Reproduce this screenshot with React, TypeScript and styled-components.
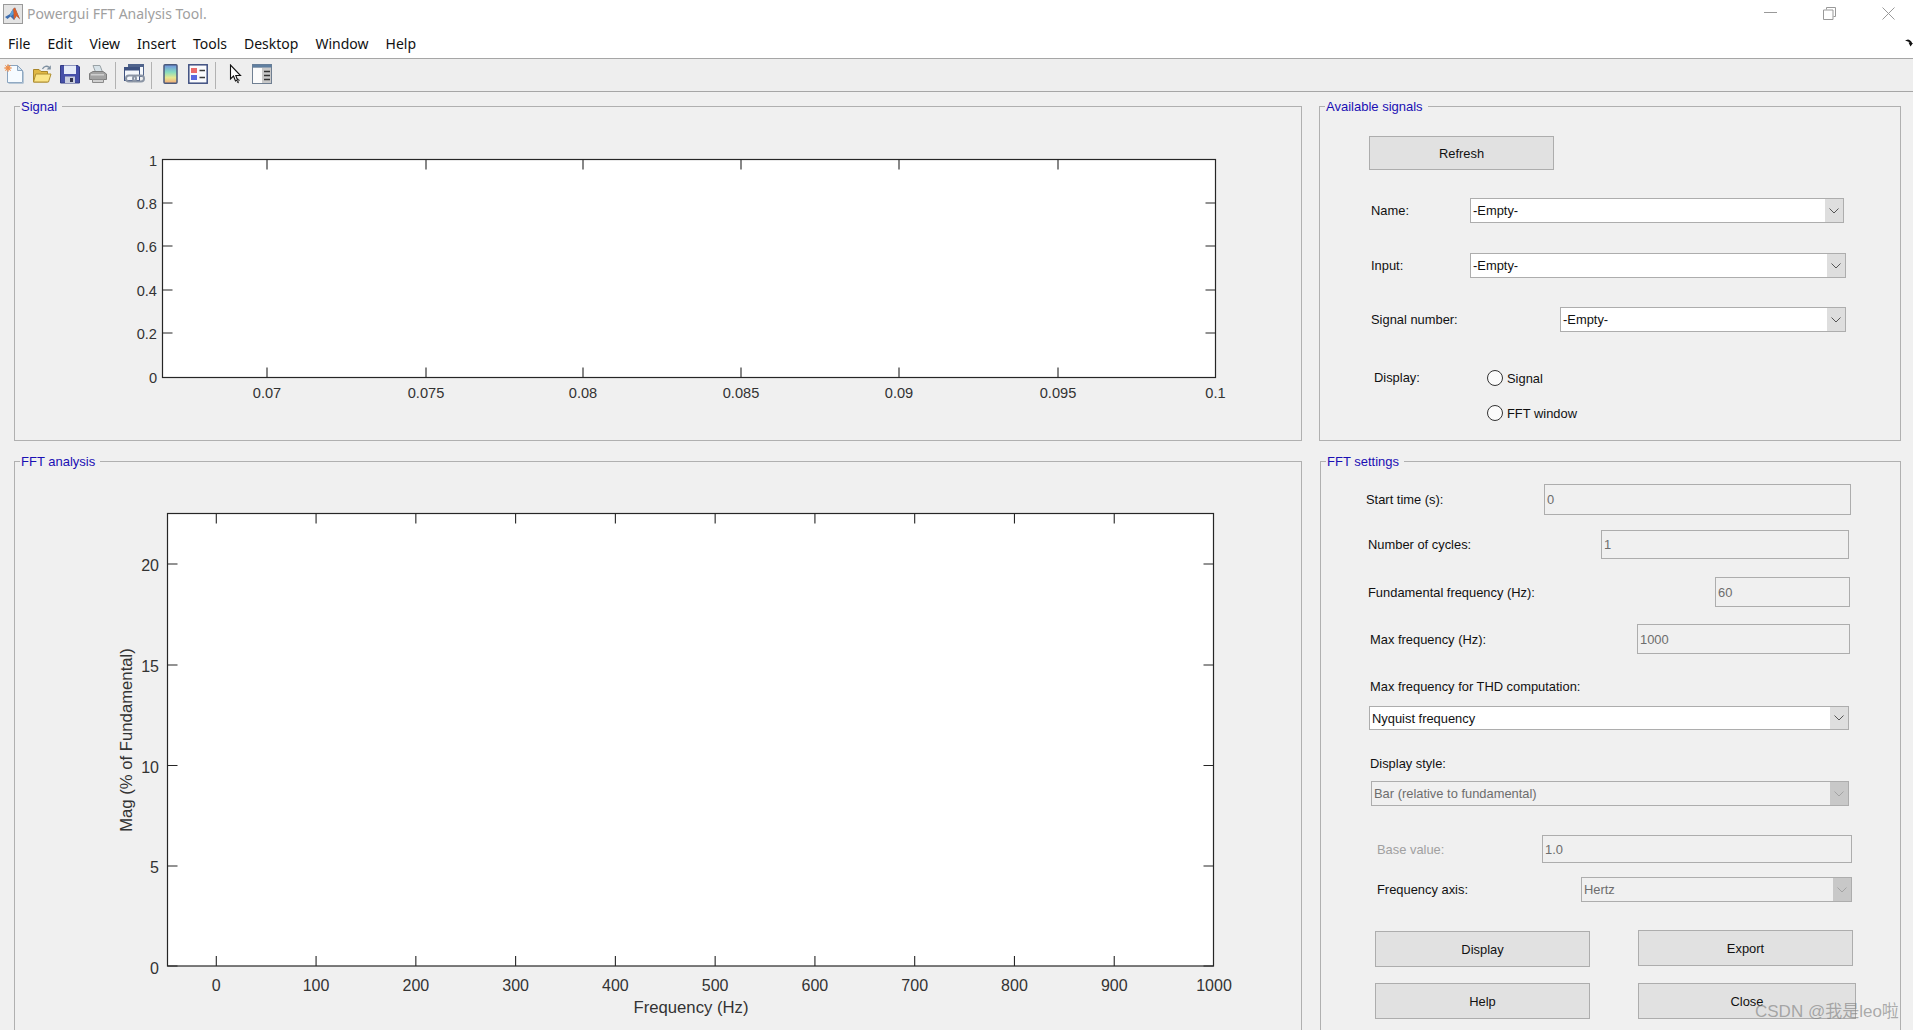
import React from "react";
import styled, { createGlobalStyle } from "styled-components";

const Global = createGlobalStyle`
  html, body { margin: 0; padding: 0; height: 100%; overflow: hidden; background: #f0f0f0; }
  #root { height: 100%; }
`;

const sans = `"Liberation Sans", Arial, sans-serif`;

const Windowed = styled.div`
  position: relative;
  width: 1913px;
  height: 1030px;
  overflow: hidden;
  background: #f0f0f0;
  font-family: ${sans};
`;
const TitleBar = styled.div`
  box-sizing: border-box;
  height: 30px;
  background: #fff;
  display: flex;
  align-items: center;
  padding: 0 18px 3px 3px;
`;
const TitleText = styled.span`
  font: 14px "Noto Sans", sans-serif;
  color: #a0a0a0;
  margin-left: 4px;
`;
const WinControls = styled.div`
  margin-left: auto;
  display: flex;
  gap: 46px;
  align-items: center;
`;
const MenuBar = styled.div`
  height: 26px;
  padding: 0 0 2px 8px;
  background: #fff;
  border-bottom: 1px solid #a6a6a6;
  display: flex;
  align-items: center;
  gap: 17px;
  font: 14px "Noto Sans", sans-serif;
  color: #111;
`;
const DockArrow = styled.svg`
  margin-left: auto;
`;
const ToolBar = styled.div`
  height: 32px;
  background: #eee;
  border-bottom: 1px solid #a6a6a6;
  display: flex;
  align-items: center;
`;
const Slot = styled.div`
  width: 28px;
  height: 20px;
  margin-bottom: 3px;
  display: flex;
  justify-content: center;
`;
const Sep = styled.div`
  width: 1px;
  height: 27px;
  margin: 0 4px 0 3px;
  background: #b2b2b2;
`;
const Main = styled.div`
  display: grid;
  grid-template-columns: 1288px 582px;
  grid-template-rows: 343px 600px;
  column-gap: 17px;
  row-gap: 12px;
  padding: 6px 0 0 14px;
`;
const Group = styled.fieldset<{ $inset?: number }>`
  margin: 0 0 0 ${(p) => p.$inset ?? 0}px;
  padding: 0;
  min-width: 0;
  border: 1px solid #b0b0b0;
`;
const Legend = styled.legend`
  margin-left: 5px;
  padding: 2px 5px 0 1px;
  font-size: 13px;
  line-height: 14px;
  color: #1a0fb4;
`;
const Plot = styled.svg`
  display: block;
`;
const Tick = styled.text<{ $size: number }>`
  font-family: ${sans};
  font-size: ${(p) => p.$size}px;
  fill: #333;
`;
const Row = styled.div<{ $mt: number; $pl: number; $pr?: number; $h: number }>`
  display: flex;
  align-items: center;
  justify-content: space-between;
  margin-top: ${(p) => p.$mt}px;
  padding-left: ${(p) => p.$pl}px;
  padding-right: ${(p) => p.$pr ?? 0}px;
  height: ${(p) => p.$h}px;
`;
const Label = styled.span<{ $muted?: boolean }>`
  font-size: 12.9px;
  color: ${(p) => (p.$muted ? "#a0a0a0" : "#111")};
  white-space: nowrap;
`;
const Field = styled.div<{ $w: number; $disabled?: boolean; $white?: boolean }>`
  box-sizing: border-box;
  width: ${(p) => p.$w}px;
  height: 100%;
  display: flex;
  align-items: center;
  padding-left: 2px;
  border: 1px solid #adadad;
  background: ${(p) => (p.$white ? "#fff" : "#f0f0f0")};
  color: ${(p) => (p.$disabled ? "#6d6d6d" : "#111")};
  font-size: 12.9px;
  white-space: nowrap;
`;
const Arrow = styled.div<{ $disabled?: boolean }>`
  margin-left: auto;
  width: 18px;
  height: 100%;
  display: flex;
  align-items: center;
  justify-content: center;
  background: ${(p) => (p.$disabled ? "#c8c8c8" : "#dedede")};
  color: ${(p) => (p.$disabled ? "#a4a4a4" : "#555")};
`;
const Button = styled.button<{ $w: number; $h: number; $mt?: number }>`
  box-sizing: border-box;
  width: ${(p) => p.$w}px;
  height: ${(p) => p.$h}px;
  margin: ${(p) => p.$mt ?? 0}px 0 0;
  padding: 1px 0 0;
  border: 1px solid #adadad;
  background: #e1e1e1;
  font: 12.9px ${sans};
  color: #111;
`;
const ButtonRow = styled.div<{ $mt: number }>`
  display: flex;
  align-items: flex-start;
  gap: 48px;
  margin-top: ${(p) => p.$mt}px;
  padding-left: 54px;
`;
const RadioCircle = styled.span`
  box-sizing: border-box;
  width: 16px;
  height: 16px;
  border-radius: 50%;
  border: 1px solid #333;
  background: #fbfbfb;
  flex: none;
`;
const RadioRow = styled.div<{ $mt: number; $pl: number }>`
  display: flex;
  align-items: center;
  height: 16px;
  margin-top: ${(p) => p.$mt}px;
  padding-left: ${(p) => p.$pl}px;
`;
const RadioText = styled.span`
  font-size: 12.9px;
  color: #111;
  margin-left: 4px;
`;
const DisplayLabel = styled.span`
  width: 113px;
  font-size: 12.9px;
  color: #111;
  margin-top: -1px;
`;
const Watermark = styled.div`
  position: absolute;
  left: 1755px;
  top: 1002px;
  font: 17px ${sans}, "Noto Sans CJK SC", sans-serif;
  line-height: 20px;
  color: rgba(125, 125, 125, 0.62);
  white-space: nowrap;
`;

const Chevron = () => (
  <svg width="10" height="6" viewBox="0 0 10 6" fill="none" stroke="currentColor" strokeWidth="1">
    <path d="M0.5 0.5 L5 5 L9.5 0.5" />
  </svg>
);

const Combo = ({ w, text, disabled, white }: { w: number; text: string; disabled?: boolean; white?: boolean }) => (
  <Field $w={w} $disabled={disabled} $white={white}>
    {text}
    <Arrow $disabled={disabled}>
      <Chevron />
    </Arrow>
  </Field>
);

const MatlabIcon = () => (
  <svg width="20" height="20" viewBox="0 0 20 20">
    <rect x="0.5" y="0.5" width="19" height="19" fill="#e4e4e4" stroke="#9a9a9a" />
    <path d="M2 13 L7 10 L10 5 L12 3.5 L17 15 L13.5 12 L11 16 L7.5 12.5 L4.5 15 Z" fill="#3f6fb0" />
    <path d="M10 5 L12 3.5 L17 15.5 L13.5 12 L11 16 L10.5 10 Z" fill="#d9612a" />
    <path d="M7 10 L10 5 L10.5 10 L7.5 12.5 Z" fill="#5fa0d8" />
  </svg>
);

const NewIcon = () => (
  <svg width="20" height="20" viewBox="0 0 20 20">
    <path d="M3.5 1.5 H13.5 L18.5 6.5 V18.5 H3.5 Z" fill="#f6fbff" stroke="#8aa4bf" />
    <path d="M13.5 1.5 V6.5 H18.5 Z" fill="#d5e4f0" stroke="#8aa4bf" />
    <path d="M4.5 19.3 H19.3 V7.5" fill="none" stroke="#a9bdd0" />
    <circle cx="4" cy="4" r="2.6" fill="#f2a86a" />
    <path d="M4 0 V8 M0 4 H8 M1.2 1.2 L6.8 6.8 M6.8 1.2 L1.2 6.8" stroke="#ea8a4c" strokeWidth="0.8" />
  </svg>
);
const OpenIcon = () => (
  <svg width="20" height="20" viewBox="0 0 20 20">
    <path d="M1.5 5.5 H7 L9 7.5 H15.5 V18 H1.5 Z" fill="#e0b844" stroke="#a8852a" />
    <path d="M1.5 18 L3.8 10 H19 L16.5 18 Z" fill="#fbe588" stroke="#b08f30" />
    <path d="M10.5 5 C12 2 15 1.6 17 3.2" fill="none" stroke="#7d8fa0" strokeWidth="1.3" />
    <path d="M18.8 1.2 V5.6 H14.6 Z" fill="#7d8fa0" />
  </svg>
);
const SaveIcon = () => (
  <svg width="20" height="20" viewBox="0 0 20 20">
    <path d="M0.5 1.5 H18 L19.5 3 V19 H0.5 Z" fill="#4650a8" stroke="#333c85" />
    <rect x="4" y="1.5" width="12" height="8.5" fill="#e6ecf8" />
    <rect x="5" y="12.5" width="10" height="6.5" fill="#c9cede" />
    <rect x="10" y="14" width="3" height="4" fill="#30344f" />
  </svg>
);
const PrintIcon = () => (
  <svg width="20" height="20" viewBox="0 0 20 20">
    <path d="M5 1.5 H12 L14.5 8 H7.5 Z" fill="#d7e2e8" stroke="#9aa2a6" />
    <path d="M1.5 9.5 L5 7.5 H15 L18.5 10 V15.5 H1.5 Z" fill="#a3a3a3" stroke="#7d7d7d" />
    <path d="M4.5 15.5 H15.5 V18.5 H4.5 Z" fill="#d0d0d0" stroke="#8b8b8b" />
    <rect x="3" y="10" width="13" height="1.5" fill="#cfcfcf" />
  </svg>
);
const LinkIcon = () => (
  <svg width="21" height="20" viewBox="0 0 21 20">
    <rect x="4.5" y="0.5" width="15" height="12" fill="#f4f7fb" stroke="#50648c" />
    <rect x="4.5" y="0.5" width="15" height="2.5" fill="#50648c" />
    <rect x="0.5" y="3.5" width="15" height="13" fill="#f4f7fb" stroke="#3e5280" />
    <rect x="0.5" y="3.5" width="15" height="3" fill="#3e5280" />
    <rect x="2" y="11.5" width="10" height="6" rx="3" fill="none" stroke="#8b95a5" strokeWidth="2" />
    <rect x="9" y="11.5" width="11" height="6" rx="3" fill="none" stroke="#8b95a5" strokeWidth="2" />
  </svg>
);
const ColorbarIcon = () => (
  <svg width="15" height="20" viewBox="0 0 15 20">
    <defs>
      <linearGradient id="cb" x1="0" y1="0" x2="0" y2="1">
        <stop offset="0" stopColor="#6e8fe0" />
        <stop offset="0.4" stopColor="#86dcc0" />
        <stop offset="0.7" stopColor="#e8e890" />
        <stop offset="1" stopColor="#f2a878" />
      </linearGradient>
    </defs>
    <rect x="1" y="0.8" width="13" height="18.4" rx="1" fill="url(#cb)" stroke="#4a5a7c" strokeWidth="1.5" />
  </svg>
);
const LegendIcon = () => (
  <svg width="20" height="20" viewBox="0 0 20 20">
    <rect x="0.8" y="0.8" width="18.4" height="18.4" fill="#fafbfd" stroke="#3e4f80" strokeWidth="1.5" />
    <rect x="3" y="4" width="6" height="5" fill="#ea6a6a" />
    <rect x="3" y="11" width="6" height="5" fill="#5a6ae0" />
    <path d="M11.5 6.5 H17 M11.5 13.5 H17" stroke="#3a3a3a" strokeWidth="1.4" />
  </svg>
);
const CursorIcon = () => (
  <svg width="20" height="20" viewBox="0 0 20 20">
    <path d="M6.5 1 L6.5 15 L9.5 12 L11.5 17 L13.5 16 L11.8 11.5 L16.5 11.5 Z" fill="#fff" stroke="#111" strokeWidth="1.1" />
    <path d="M13 15 C15.5 15 16 17 14 17.3 C12.5 17.6 13 19 15 18.6" fill="none" stroke="#111" strokeWidth="0.9" />
  </svg>
);
const BrowserIcon = () => (
  <svg width="20" height="20" viewBox="0 0 20 20">
    <rect x="0.5" y="0.5" width="19" height="19" fill="#c8c8c8" stroke="#6f7f92" />
    <rect x="0.5" y="0.5" width="19" height="3" fill="#5f7fa0" />
    <rect x="1" y="4" width="9" height="15" fill="#fbfbfb" />
    <path d="M12 7.5 H18 M12 11.5 H18 M12 15.5 H18" stroke="#333" strokeWidth="1.4" />
  </svg>
);

const sigX = [
  [267, "0.07"],
  [426, "0.075"],
  [583, "0.08"],
  [741, "0.085"],
  [899, "0.09"],
  [1058, "0.095"],
  [1215.5, "0.1"],
] as const;
const sigY = [
  [159.5, "1", 6],
  [203, "0.8", 6],
  [246, "0.6", 6],
  [290, "0.4", 6],
  [333, "0.2", 6],
  [377.5, "0", 5],
] as const;
const fftX = Array.from({ length: 11 }, (_, i) => [216.3 + 99.77 * i, String(i * 100)] as const);
const fftY = [
  [966, "0", 8],
  [866, "5", 7],
  [765.5, "10", 7],
  [665, "15", 7],
  [564, "20", 7],
] as const;

const axisColor = "#262626";

const SignalPlot = () => (
  <Plot width="1286" height="319" viewBox="15 114 1286 319">
    <rect x="162.5" y="159.5" width="1053" height="218" fill="#fff" stroke={axisColor} strokeWidth="1.2" />
    {sigX.map(([x, t]) => (
      <g key={t}>
        {x < 1215 && <path d={`M${x} 159.5 v10 M${x} 377.5 v-10`} stroke={axisColor} strokeWidth="1.1" />}
        <Tick $size={14.6} x={x} y={398} textAnchor="middle">{t}</Tick>
      </g>
    ))}
    {sigY.map(([y, t, d]) => (
      <g key={t}>
        <path d={`M162.5 ${y} h10 M1215.5 ${y} h-10`} stroke={axisColor} strokeWidth="1.1" />
        <Tick $size={14.6} x={157} y={y + d} textAnchor="end">{t}</Tick>
      </g>
    ))}
  </Plot>
);

const FftPlot = () => (
  <Plot width="1286" height="570" viewBox="15 469 1286 570">
    <rect x="167.5" y="513.5" width="1046" height="452.5" fill="#fff" stroke={axisColor} strokeWidth="1.2" />
    {fftX.map(([x, t]) => (
      <g key={t}>
        {x < 1213 && <path d={`M${x} 513.5 v10 M${x} 966 v-10`} stroke={axisColor} strokeWidth="1.1" />}
        <Tick $size={16} x={x} y={991} textAnchor="middle">{t}</Tick>
      </g>
    ))}
    {fftY.map(([y, t, d]) => (
      <g key={t}>
        <path d={`M167.5 ${y} h10 M1213.5 ${y} h-10`} stroke={axisColor} strokeWidth="1.1" />
        <Tick $size={16} x={159} y={y + d} textAnchor="end">{t}</Tick>
      </g>
    ))}
    <Tick $size={16.7} x={691} y={1013} textAnchor="middle">Frequency (Hz)</Tick>
    <Tick $size={16.7} x={0} y={0} textAnchor="middle" transform="translate(132 740) rotate(-90)">Mag (% of Fundamental)</Tick>
  </Plot>
);

export default function App() {
  return (
    <Windowed>
      <Global />
      <TitleBar>
        <MatlabIcon />
        <TitleText>Powergui FFT Analysis Tool.</TitleText>
        <WinControls>
          <svg width="13" height="13" viewBox="0 0 13 13" stroke="#999" fill="none"><path d="M0 5.5 H13" /></svg>
          <svg width="13" height="13" viewBox="0 0 13 13" stroke="#999" fill="none"><path d="M3.5 2.5 V0.5 H12.5 V9.5 H10.5 M0.5 3 H10 V12.5 H0.5 Z" /></svg>
          <svg width="13" height="13" viewBox="0 0 13 13" stroke="#999" fill="none"><path d="M0.5 0.5 L12.5 12.5 M12.5 0.5 L0.5 12.5" /></svg>
        </WinControls>
      </TitleBar>
      <MenuBar>
        {["File", "Edit", "View", "Insert", "Tools", "Desktop", "Window", "Help"].map((m) => (
          <span key={m}>{m}</span>
        ))}
        <DockArrow width="8" height="8" viewBox="0 0 8 8"><path d="M0 1.5 L3 0.5 C5 1 7 2.5 7 4 L8 4 L5.5 7.5 L3.5 3.5 L4.8 3.8 C4 2.8 2 2.2 0 1.5 Z" fill="#111" /></DockArrow>
      </MenuBar>
      <ToolBar>
        <Slot><NewIcon /></Slot>
        <Slot><OpenIcon /></Slot>
        <Slot><SaveIcon /></Slot>
        <Slot><PrintIcon /></Slot>
        <Sep />
        <Slot><LinkIcon /></Slot>
        <Sep />
        <Slot><ColorbarIcon /></Slot>
        <Slot><LegendIcon /></Slot>
        <Sep />
        <Slot><CursorIcon /></Slot>
        <Slot><BrowserIcon /></Slot>
      </ToolBar>
      <Main>
        <Group>
          <Legend>Signal</Legend>
          <SignalPlot />
        </Group>
        <Group>
          <Legend>Available signals</Legend>
          <Row $mt={22} $pl={49} $h={34}>
            <Button $w={185} $h={34}>Refresh</Button>
          </Row>
          <Row $mt={28} $pl={51} $pr={56} $h={25}>
            <Label>Name:</Label>
            <Combo w={374} text="-Empty-" white />
          </Row>
          <Row $mt={30} $pl={51} $pr={54} $h={25}>
            <Label>Input:</Label>
            <Combo w={376} text="-Empty-" white />
          </Row>
          <Row $mt={29} $pl={51} $pr={54} $h={25}>
            <Label>Signal number:</Label>
            <Combo w={286} text="-Empty-" white />
          </Row>
          <RadioRow $mt={38} $pl={54}>
            <DisplayLabel>Display:</DisplayLabel>
            <RadioCircle />
            <RadioText>Signal</RadioText>
          </RadioRow>
          <RadioRow $mt={19} $pl={167}>
            <RadioCircle />
            <RadioText>FFT window</RadioText>
          </RadioRow>
        </Group>
        <Group>
          <Legend>FFT analysis</Legend>
          <FftPlot />
        </Group>
        <Group $inset={1}>
          <Legend>FFT settings</Legend>
          <Row $mt={15} $pl={45} $pr={49} $h={31}>
            <Label>Start time (s):</Label>
            <Field $w={307} $disabled>0</Field>
          </Row>
          <Row $mt={15} $pl={47} $pr={51} $h={29}>
            <Label>Number of cycles:</Label>
            <Field $w={248} $disabled>1</Field>
          </Row>
          <Row $mt={18} $pl={47} $pr={50} $h={30}>
            <Label>Fundamental frequency (Hz):</Label>
            <Field $w={135} $disabled>60</Field>
          </Row>
          <Row $mt={17} $pl={49} $pr={50} $h={30}>
            <Label>Max frequency (Hz):</Label>
            <Field $w={213} $disabled>1000</Field>
          </Row>
          <Row $mt={24} $pl={49} $h={16}>
            <Label>Max frequency for THD computation:</Label>
          </Row>
          <Row $mt={12} $pl={48} $pr={51} $h={24}>
            <Combo w={480} text="Nyquist frequency" white />
          </Row>
          <Row $mt={25} $pl={49} $h={16}>
            <Label>Display style:</Label>
          </Row>
          <Row $mt={10} $pl={50} $pr={51} $h={25}>
            <Combo w={478} text="Bar (relative to fundamental)" disabled />
          </Row>
          <Row $mt={29} $pl={56} $pr={48} $h={28}>
            <Label $muted>Base value:</Label>
            <Field $w={310} $disabled>1.0</Field>
          </Row>
          <Row $mt={14} $pl={56} $pr={48} $h={25}>
            <Label>Frequency axis:</Label>
            <Combo w={271} text="Hertz" disabled />
          </Row>
          <ButtonRow $mt={28}>
            <Button $w={215} $h={36} $mt={1}>Display</Button>
            <Button $w={215} $h={36}>Export</Button>
          </ButtonRow>
          <ButtonRow $mt={16}>
            <Button $w={215} $h={36}>Help</Button>
            <Button $w={218} $h={36}>Close</Button>
          </ButtonRow>
        </Group>
      </Main>
      <Watermark>CSDN @我是leo啦</Watermark>
    </Windowed>
  );
}
